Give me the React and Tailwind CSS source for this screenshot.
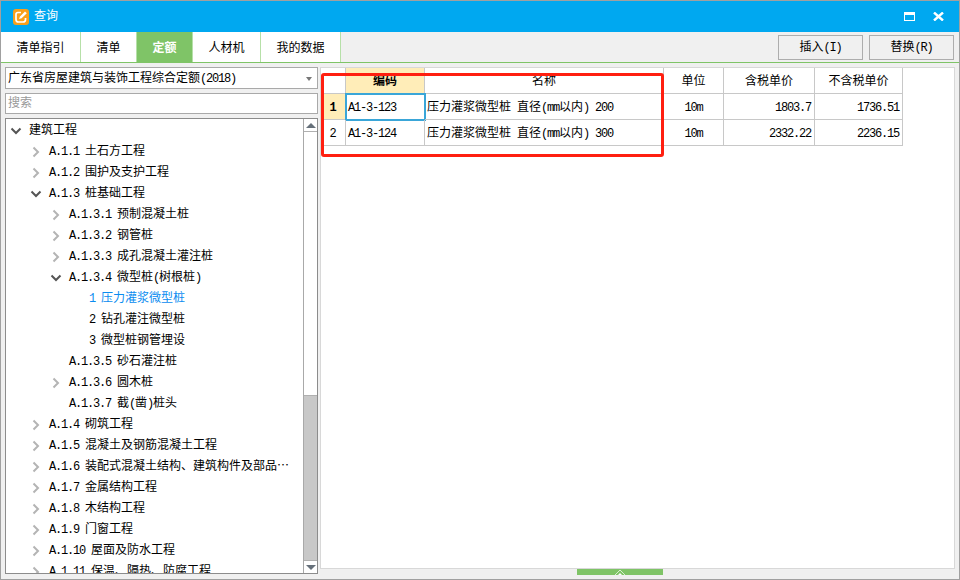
import React from 'react';

const FONT = "font-['Liberation_Mono','Noto_Sans_CJK_SC',monospace]";

// ascii runs are squeezed to 6px per char like the bitmap font in the app
const Mixed = ({ text }) => (
  <span className="whitespace-pre">
    {text.split(/([\x00-\x7f]+)/).filter(Boolean).map((part, i) =>
      /^[\x00-\x7f]/.test(part)
        ? <span key={i} className="tracking-[-1.2px]">{part}</span>
        : <span key={i}>{part}</span>
    )}
  </span>
);

const tabs = [
  { label: '清单指引', w: 'w-[80px]' },
  { label: '清单', w: 'w-[56px]' },
  { label: '定额', w: 'w-[56px]', active: true },
  { label: '人材机', w: 'w-[68px]' },
  { label: '我的数据', w: 'w-[80px]' },
];

const tree = [
  { level: 0, text: '建筑工程', icon: 'down' },
  { level: 1, text: 'A.1.1 土石方工程', icon: 'right' },
  { level: 1, text: 'A.1.2 围护及支护工程', icon: 'right' },
  { level: 1, text: 'A.1.3 桩基础工程', icon: 'down' },
  { level: 2, text: 'A.1.3.1 预制混凝土桩', icon: 'right' },
  { level: 2, text: 'A.1.3.2 钢管桩', icon: 'right' },
  { level: 2, text: 'A.1.3.3 成孔混凝土灌注桩', icon: 'right' },
  { level: 2, text: 'A.1.3.4 微型桩(树根桩)', icon: 'down' },
  { level: 3, text: '1 压力灌浆微型桩', active: true },
  { level: 3, text: '2 钻孔灌注微型桩' },
  { level: 3, text: '3 微型桩钢管埋设' },
  { level: 2, text: 'A.1.3.5 砂石灌注桩' },
  { level: 2, text: 'A.1.3.6 圆木桩', icon: 'right' },
  { level: 2, text: 'A.1.3.7 截(凿)桩头' },
  { level: 1, text: 'A.1.4 砌筑工程', icon: 'right' },
  { level: 1, text: 'A.1.5 混凝土及钢筋混凝土工程', icon: 'right' },
  { level: 1, text: 'A.1.6 装配式混凝土结构、建筑构件及部品⋯', icon: 'right' },
  { level: 1, text: 'A.1.7 金属结构工程', icon: 'right' },
  { level: 1, text: 'A.1.8 木结构工程', icon: 'right' },
  { level: 1, text: 'A.1.9 门窗工程', icon: 'right' },
  { level: 1, text: 'A.1.10 屋面及防水工程', icon: 'right' },
  { level: 1, text: 'A.1.11 保温、隔热、防腐工程', icon: 'right' },
];

const indent = ['pl-[4px]', 'pl-[24px]', 'pl-[44px]', 'pl-[77px]'];

const rows = [
  { no: '1', code: 'A1-3-123', name: '压力灌浆微型桩 直径(mm以内) 200', unit: '10m', tax: '1803.7', noTax: '1736.51' },
  { no: '2', code: 'A1-3-124', name: '压力灌浆微型桩 直径(mm以内) 300', unit: '10m', tax: '2332.22', noTax: '2236.15' },
];

const cols = ['w-[25px]', 'w-[79px]', 'w-[239px]', 'w-[60px]', 'w-[91px]', 'w-[88px]'];

const Chevron = ({ type }) => {
  if (type === 'down') {
    return (
      <svg width="12" height="12" viewBox="0 0 12 12" className="shrink-0">
        <path d="M1.5 3.5 L6 8 L10.5 3.5" fill="none" stroke="#555555" strokeWidth="2" />
      </svg>
    );
  }
  if (type === 'right') {
    return (
      <svg width="12" height="12" viewBox="0 0 12 12" className="shrink-0">
        <path d="M3.5 1.5 L8 6 L3.5 10.5" fill="none" stroke="#b4b4b4" strokeWidth="2" />
      </svg>
    );
  }
  return <span className="w-[12px] shrink-0" />;
};

const Logo = () => (
  <svg width="16" height="16" viewBox="0 0 16 16" className="shrink-0">
    <rect x="0" y="0" width="16" height="16" rx="3" fill="#f9a01b" />
    <path d="M8 3.5 H5 Q3 3.5 3 5.5 V10.5 Q3 13 5.5 13 H10 Q12.5 13 12.5 10.5 V9" fill="none" stroke="#fff" strokeWidth="1.7" />
    <path d="M6 10 L7 7.5 L12 2.5 L13.8 4.2 L8.6 9.2 Z" fill="#fff" />
  </svg>
);

const Cell = ({ w, className = '', children }) => (
  <div className={`${w} shrink-0 h-[26px] pt-[2px] border-r border-b border-[#c8c8c8] flex items-center ${className}`}>
    {children}
  </div>
);

export default function App() {
  return (
    <div className={`${FONT} w-[960px] h-[580px] border border-[#a0a0a0] bg-[#f0f0f0] flex flex-col overflow-hidden text-[12px] leading-none text-black relative`}>
      {/* title bar */}
      <div className="h-[31px] shrink-0 bg-[#00a8f0] flex items-center pl-[12px] pr-[15px]">
        <Logo />
        <span className="ml-[5px] pt-[1px] text-white">查询</span>
        <div className="ml-auto flex items-center gap-[18px]">
          <div className="w-[11px] h-[9px] border border-white border-t-[3px]" />
          <svg width="11" height="9" viewBox="0 0 11 9">
            <path d="M1 0.5 L10 8.5 M10 0.5 L1 8.5" stroke="#fff" strokeWidth="2.4" />
          </svg>
        </div>
      </div>

      {/* tabs */}
      <div className="h-[31px] shrink-0 flex border-b border-[#7fc467] relative">
        {tabs.map(t => (
          <div
            key={t.label}
            className={`${t.w} shrink-0 pt-[3px] flex items-center justify-center border-r border-[#b6e0a8] ${t.active ? 'bg-[#7fc467] text-white font-bold' : 'bg-white'}`}
          >
            {t.label}
          </div>
        ))}
        <div className="ml-auto flex gap-[6px] pt-[3px] pr-[5px]">
          {['插入(I)', '替换(R)'].map(label => (
            <div key={label} className="w-[85px] h-[25px] pt-[1px] border border-[#adadad] flex items-center justify-center">
              <Mixed text={label} />
            </div>
          ))}
        </div>
      </div>

      {/* body */}
      <div className="flex-1 min-h-0 flex pl-[4px] pr-[4px] pt-[4px] pb-[5px] gap-[2px]">
        <div className="w-[313px] shrink-0 flex flex-col gap-[4px]">
          <div className="h-[22px] shrink-0 pt-[1px] bg-white border border-[#a9a9a9] flex items-center pl-[2px] pr-[5px]">
            <Mixed text="广东省房屋建筑与装饰工程综合定额(2018)" />
            <span className="ml-auto w-0 h-0 border-x-[3px] border-x-transparent border-t-[4px] border-t-[#777777]" />
          </div>
          <div className="h-[21px] shrink-0 pt-[1px] bg-white border border-[#a9a9a9] flex items-center pl-[2px] text-[#999999]">搜索</div>
          <div className="flex-1 min-h-0 bg-white border border-[#8c8c8c] flex overflow-hidden">
            <div className="flex-1 min-w-0 overflow-hidden pt-[1px]">
              {tree.map(n => (
                <div key={n.text} className={`h-[21px] flex items-center ${indent[n.level]} ${n.active ? 'text-[#0a8cf0]' : ''}`}>
                  <Chevron type={n.icon} />
                  <span className={n.level === 3 ? 'ml-[-6px]' : 'ml-[7px]'}><Mixed text={n.text} /></span>
                </div>
              ))}
            </div>
            {/* scrollbar */}
            <div className="w-[14px] shrink-0 bg-[#c8c8c8] border-l border-[#a9a9a9] flex flex-col">
              <div className="h-[13px] shrink-0 bg-white flex items-center justify-center border-b border-[#b0b0b0]">
                <span className="w-0 h-0 border-x-[5px] border-x-transparent border-b-[5px] border-b-[#66707a]" />
              </div>
              <div className="h-[264px] shrink-0 bg-white border-b border-[#b0b0b0]" />
              <div className="flex-1" />
              <div className="h-[13px] shrink-0 bg-white flex items-center justify-center border-t border-[#b0b0b0]">
                <span className="w-0 h-0 border-x-[5px] border-x-transparent border-t-[5px] border-t-[#66707a]" />
              </div>
            </div>
          </div>
        </div>

        {/* right table */}
        <div className="flex-1 min-w-0 bg-white border border-[#d8d8d8] h-[502px]">
          <div className="flex">
            <Cell w={cols[0]} />
            <Cell w={cols[1]} className="bg-[#ffedb8] justify-center font-bold">编码</Cell>
            <Cell w={cols[2]} className="justify-center">名称</Cell>
            <Cell w={cols[3]} className="justify-center">单位</Cell>
            <Cell w={cols[4]} className="justify-center">含税单价</Cell>
            <Cell w={cols[5]} className="justify-center">不含税单价</Cell>
          </div>
          {rows.map((r, i) => (
            <div key={r.no} className="flex">
              <Cell w={cols[0]} className={`justify-center ${i === 0 ? 'bg-[#ffedb8] font-bold' : ''}`}>{r.no}</Cell>
              <Cell w={cols[1]} className={`pl-[2px] ${i === 0 ? 'outline-2 -outline-offset-1 outline-[#3aa6d8]' : ''}`}><Mixed text={r.code} /></Cell>
              <Cell w={cols[2]} className="pl-[2px]"><Mixed text={r.name} /></Cell>
              <Cell w={cols[3]} className="justify-center"><Mixed text={r.unit} /></Cell>
              <Cell w={cols[4]} className="justify-end pr-[3px]"><Mixed text={r.tax} /></Cell>
              <Cell w={cols[5]} className="justify-end pr-[3px]"><Mixed text={r.noTax} /></Cell>
            </div>
          ))}
        </div>
      </div>

      {/* annotation drawn over the table */}
      <div className="absolute left-[320px] top-[72px] w-[343px] h-[84px] border-[3px] border-[#ff1f10] rounded-[3px] pointer-events-none" />

      {/* collapse handle */}
      <div className="absolute left-[576px] top-[568px] w-[86px] h-[6px] bg-[#7fc467] flex justify-center">
        <svg width="10" height="6" viewBox="0 0 10 6">
          <path d="M0 6 L5 1 L10 6" fill="none" stroke="#d9f0d0" strokeWidth="1" />
          <path d="M3 6 L5 4 L7 6 Z" fill="#fff" />
        </svg>
      </div>
    </div>
  );
}
